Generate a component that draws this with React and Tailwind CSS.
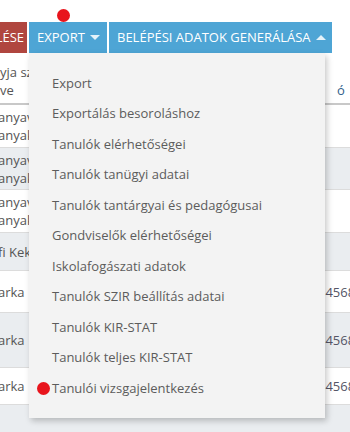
import { useState } from 'react'

const MENU = [
  'Export',
  'Exportálás besoroláshoz',
  'Tanulók elérhetőségei',
  'Tanulók tanügyi adatai',
  'Tanulók tantárgyai és pedagógusai',
  'Gondviselők elérhetőségei',
  'Iskolafogászati adatok',
  'Tanulók SZIR beállítás adatai',
  'Tanulók KIR-STAT',
  'Tanulók teljes KIR-STAT',
  'Tanulói vizsgajelentkezés',
]

// rows of the table behind the dropdown; only the edges show
const ROWS = [
  { h: 'h-[43px]', bg: 'bg-white',     left: ['anyavezetéknév', 'anyakeresztnév'], right: '' },
  { h: 'h-[42px]', bg: 'bg-[#eaedf0]', left: ['anyavezetéknév', 'anyakeresztnév'], right: '' },
  { h: 'h-[43px]', bg: 'bg-white',     left: ['anyavezetéknév', 'anyakeresztnév'], right: '' },
  { h: 'h-[38px]', bg: 'bg-[#eaedf0]', left: ['fi Kekec'], right: '' },
  { h: 'h-[42px]', bg: 'bg-white',     left: ['arka'], right: '34568' },
  { h: 'h-[55px]', bg: 'bg-[#eaedf0]', left: ['arka'], right: '34568' },
  { h: 'h-[37px]', bg: 'bg-white',     left: ['arka'], right: '34568' },
]

function Caret({ up }) {
  return (
    <svg width="10" height="5" viewBox="0 0 10 5" className="ml-[5px]">
      <path d={up ? 'M0 5 L5 0 L10 5 Z' : 'M0 0 L5 5 L10 0 Z'} fill="#ffffff" fillOpacity="0.85" />
    </svg>
  )
}

export default function App() {
  const [open] = useState(true)

  return (
    <div className="relative w-[350px] h-[432px] overflow-hidden bg-white font-['Open_Sans',sans-serif] text-[13px] text-[#555]">
      {/* toolbar */}
      <div className="flex pt-[22px] gap-[2px] text-white uppercase">
        <div className="w-[27px] h-[31px] bg-[#b0463f] flex items-center justify-end pr-[3px] overflow-hidden">LÉSE</div>
        <div className="w-[78px] h-[31px] bg-[#4ea5d5] flex items-center pl-[8px]">
          Export
          <Caret />
        </div>
        <div className="w-[223px] h-[31px] bg-[#4ea5d5] flex items-center pl-[8px] whitespace-nowrap">
          Belépési adatok generálása
          <Caret up />
        </div>
      </div>

      {/* table */}
      <div className="mt-[9px] leading-[18px]">
        <div className="flex h-[43px] border-b-2 border-[#c8c8c8]">
          <div className="w-[29px] overflow-hidden whitespace-nowrap pt-[1px]">
            <div>yja sz</div>
            <div>ve</div>
          </div>
          <div className="flex-1" />
          <div className="w-[31px] overflow-hidden whitespace-nowrap pt-[19px] pl-[18px] text-[#2f5f8a]">ó</div>
        </div>
        {ROWS.map((r, i) => (
          <div key={i} className={`flex ${r.h} ${r.bg} border-b border-[#dcdcdc] items-center`}>
            <div className="w-[29px] overflow-hidden whitespace-nowrap">
              <div className="-ml-[2px]">
                {r.left.map((t, j) => <div key={j}>{t}</div>)}
              </div>
            </div>
            <div className="flex-1" />
            <div className="w-[32px] overflow-hidden whitespace-nowrap text-[#556]">{r.right}</div>
          </div>
        ))}
        <div className="h-[40px] bg-[#eaedf0]" />
      </div>

      {/* dropdown menu */}
      {open && (
        <div className="absolute left-[29px] top-[53px] w-[296px] h-[365px] bg-[#f3f3f3] py-[15px] shadow-[2px_3px_6px_rgba(0,0,0,0.22)]">
          {MENU.map(m => (
            <div key={m} className="h-[30.5px] flex items-center pl-[23px] text-[#5c5c5c] whitespace-nowrap">{m}</div>
          ))}
        </div>
      )}

      {/* markers */}
      <div className="absolute left-[57px] top-[9px] w-[13px] h-[13px] rounded-full bg-[#e8141c]" />
      <div className="absolute left-[37px] top-[382px] w-[13px] h-[13px] rounded-full bg-[#e8141c]" />
    </div>
  )
}
